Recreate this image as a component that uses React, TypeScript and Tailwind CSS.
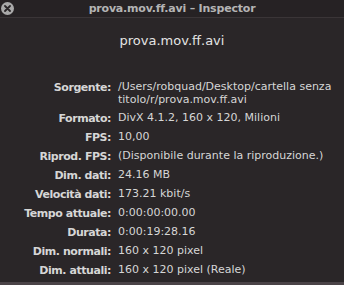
import React from "react";

const rows: [string, string[]][] = [
  ["Sorgente:", ["/Users/robquad/Desktop/cartella senza", "titolo/r/prova.mov.ff.avi"]],
  ["Formato:", ["DivX 4.1.2, 160 x 120, Milioni"]],
  ["FPS:", ["10,00"]],
  ["Riprod. FPS:", ["(Disponibile durante la riproduzione.)"]],
  ["Dim. dati:", ["24.16 MB"]],
  ["Velocità dati:", ["173.21 kbit/s"]],
  ["Tempo attuale:", ["0:00:00:00.00"]],
  ["Durata:", ["0:00:19:28.16"]],
  ["Dim. normali:", ["160 x 120 pixel"]],
  ["Dim. attuali:", ["160 x 120 pixel (Reale)"]],
];

export default function App() {
  return (
    <div
      className="w-[344px] h-[285px] bg-[#2a2628] flex flex-col overflow-hidden"
      style={{ fontFamily: '"DejaVu Sans", "Liberation Sans", sans-serif' }}
    >
      <div className="h-[18px] relative flex items-center justify-center border-b border-[#3a3537] bg-[#262224]">
        <div className="absolute left-[1px] top-[2px] w-[13px] h-[13px] rounded-full bg-[#a9a9a9] flex items-center justify-center">
          <svg width="7" height="7" viewBox="0 0 7 7">
            <path d="M1 1 L6 6 M6 1 L1 6" stroke="#2a2628" strokeWidth="1.8" strokeLinecap="round" />
          </svg>
        </div>
        <span className="text-[11px] font-bold text-[#b4b4b4] leading-none tracking-[-0.2px]">
          prova.mov.ff.avi – Inspector
        </span>
      </div>
      <div className="flex justify-center pt-[15px] h-[63px]">
        <span className="text-[13px] text-[#e4e4e4] leading-[16px]">prova.mov.ff.avi</span>
      </div>
      <div className="flex flex-col gap-[6px] flex-1">
        {rows.map(([label, vals]) => (
          <div key={label} className="flex">
            <div className="w-[111px] shrink-0 text-right text-[11px] font-bold text-[#d6d6d6] leading-[13px] tracking-[-0.45px]">
              {label}
            </div>
            <div className="pl-[7px] flex flex-col text-[11px] text-[#d6d6d6] leading-[12px]">
              {vals.map((v) => (
                <span key={v} className="whitespace-nowrap leading-[13px] first:leading-[12px]">{v}</span>
              ))}
            </div>
          </div>
        ))}
      </div>
      <div className="h-[3px] bg-[#4a4347]" />
    </div>
  );
}
